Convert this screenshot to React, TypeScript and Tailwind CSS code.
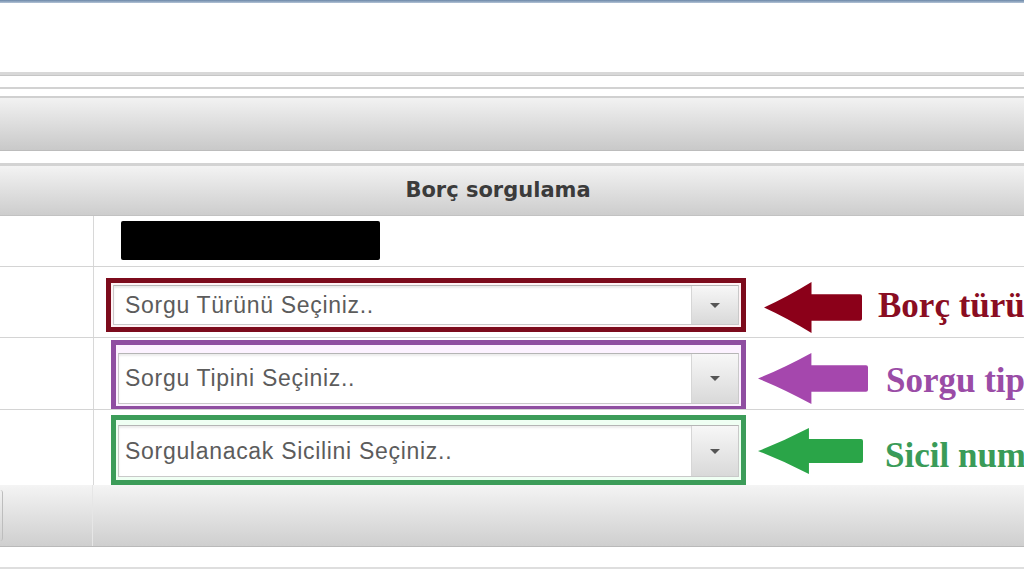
import React from 'react';

type ArrowProps = { w: number; h: number; color: string };

function Arrow({ w, h, color }: ArrowProps) {
  // head takes half the width, shaft about half the height
  const hx = w * 0.49;
  const t = h * 0.25;
  const b = h * 0.75;
  return (
    <svg width={w} height={h} viewBox={`0 0 ${w} ${h}`} className="shrink-0">
      <path
        d={`M1 ${h / 2} Q${hx * 0.5} ${h * 0.3} ${hx} 1 L${hx} ${t} L${w - 2} ${t} Q${w} ${t} ${w} ${t + 2} L${w} ${b - 2} Q${w} ${b} ${w - 2} ${b} L${hx} ${b} L${hx} ${h - 1} Q${hx * 0.5} ${h * 0.7} 1 ${h / 2} Z`}
        fill={color}
      />
    </svg>
  );
}

function SelectBox({ text, height, pad }: { text: string; height: string; pad: string }) {
  return (
    <div className={`flex ${height} bg-white border border-[#c9c9c9] border-t-[#b5b5b5] shadow-[inset_0_2px_2px_rgba(0,0,0,0.08)]`}>
      <div className={`flex-1 flex items-center ${pad} text-[23px] text-[#5c5c5c] tracking-[0.7px] whitespace-nowrap overflow-hidden`}>
        {text}
      </div>
      <div className="w-[47px] flex items-center justify-center border-l border-[#d6d6d6] bg-gradient-to-b from-[#f7f7f7] to-[#d9d9d9]">
        <div className="w-0 h-0 border-l-[5px] border-r-[5px] border-t-[5px] border-l-transparent border-r-transparent border-t-[#555]" />
      </div>
    </div>
  );
}

export default function App() {
  return (
    <div
      className="w-[1024px] h-[576px] overflow-hidden bg-white flex flex-col"
      style={{ fontFamily: '"Liberation Sans", Arial, sans-serif' }}
    >
      <div className="h-[3px] bg-gradient-to-b from-[#6c88a8] to-[#b4c4d6]" />
      <div className="h-[69px]" />
      <div className="h-[4px] bg-[#d8d8d8] border-b border-[#c6c6c6]" />
      <div className="h-[11px]" />
      <div className="h-[2px] bg-[#d2d2d2]" />
      <div className="h-[7px]" />
      <div className="h-[2px] bg-[#d0d0d0]" />
      <div className="h-[53px] bg-gradient-to-b from-[#f2f2f2] to-[#c9c9c9] border-b border-[#bcbcbc]" />
      <div className="h-[12px]" />
      <div className="h-[3px] bg-[#d3d3d3]" />
      <div className="h-[50px] flex items-center justify-center pr-[28px] bg-gradient-to-b from-[#f3f3f3] to-[#cdcdcd] border-b border-[#c2c2c2]">
        <span
          className="text-[21px] font-bold text-[#3b3b3b]"
          style={{ fontFamily: '"DejaVu Sans", sans-serif' }}
        >
          Borç sorgulama
        </span>
      </div>

      {/* row 1 */}
      <div className="h-[51px] flex border-b border-[#d4d4d4]">
        <div className="w-[94px] shrink-0 border-r border-[#d8d8d8]" />
        <div className="flex-1">
          <div className="ml-[27px] mt-[5px] w-[259px] h-[39px] bg-black rounded-[2px]" />
        </div>
      </div>

      {/* row 2 */}
      <div className="h-[71px] flex border-b border-[#d4d4d4] overflow-hidden">
        <div className="w-[94px] shrink-0 border-r border-[#d8d8d8]" />
        <div className="flex-1 flex items-start">
          <div className="ml-[12px] mt-[11px] w-[640px] h-[54px] shrink-0 border-[5px] border-[#7c0b1c] p-[2px] bg-[#fff3f5]">
            <SelectBox text="Sorgu Türünü Seçiniz.." height="h-[40px]" pad="pl-[11px]" />
          </div>
          <div className="ml-[17px] mt-[14px]">
            <Arrow w={99} h={53} color="#8b0019" />
          </div>
          <span
            className="ml-[16px] mt-[21px] text-[35px] leading-[35px] font-bold text-[#8a0d22] whitespace-nowrap"
            style={{ fontFamily: '"Liberation Serif", "Times New Roman", serif' }}
          >
            Borç türünü seçiniz
          </span>
        </div>
      </div>

      {/* row 3 */}
      <div className="h-[72px] flex border-b border-[#d4d4d4] overflow-hidden">
        <div className="w-[94px] shrink-0 border-r border-[#d8d8d8]" />
        <div className="flex-1 flex items-start">
          <div className="ml-[17px] mt-[2px] w-[635px] h-[71px] shrink-0 border-[5px] border-[#8f4ea1] pt-[8px] pb-[2px] px-[2px] bg-[#fcf2ff]">
            <SelectBox text="Sorgu Tipini Seçiniz.." height="h-[51px]" pad="pl-[6px]" />
          </div>
          <div className="ml-[11px] mt-[14px]">
            <Arrow w={111} h={53} color="#a547ad" />
          </div>
          <span
            className="ml-[18px] mt-[25px] text-[35px] leading-[35px] font-bold text-[#9a4ca6] whitespace-nowrap"
            style={{ fontFamily: '"Liberation Serif", "Times New Roman", serif' }}
          >
            Sorgu tipini seçiniz
          </span>
        </div>
      </div>

      {/* row 4 */}
      <div className="h-[75px] flex overflow-hidden">
        <div className="w-[94px] shrink-0 border-r border-[#d8d8d8]" />
        <div className="flex-1 flex items-start">
          <div className="ml-[17px] mt-[5px] w-[635px] h-[70px] shrink-0 border-[5px] border-[#3c9c59] pt-[5px] pb-[3px] px-[2px] bg-[#effff3]">
            <SelectBox text="Sorgulanacak Sicilini Seçiniz.." height="h-[52px]" pad="pl-[6px]" />
          </div>
          <div className="ml-[11px] mt-[17px]">
            <Arrow w={106} h={48} color="#2aa548" />
          </div>
          <span
            className="ml-[22px] mt-[28px] text-[35px] leading-[35px] font-bold text-[#3a9b58] whitespace-nowrap"
            style={{ fontFamily: '"Liberation Serif", "Times New Roman", serif' }}
          >
            Sicil numarasını seçiniz
          </span>
        </div>
      </div>

      {/* bottom bar */}
      <div className="h-[62px] flex bg-gradient-to-b from-[#f4f4f4] to-[#cfcfcf] border-b border-[#b9b9b9]">
        <div className="w-[3px] my-[5px] rounded-r-[3px] border-r border-[#bdbdbd]" />
        <div className="w-[90px] border-r border-[#e6e6e6]" />
      </div>
      <div className="h-[20px]" />
      <div className="h-[2px] bg-[#dedede]" />
    </div>
  );
}
